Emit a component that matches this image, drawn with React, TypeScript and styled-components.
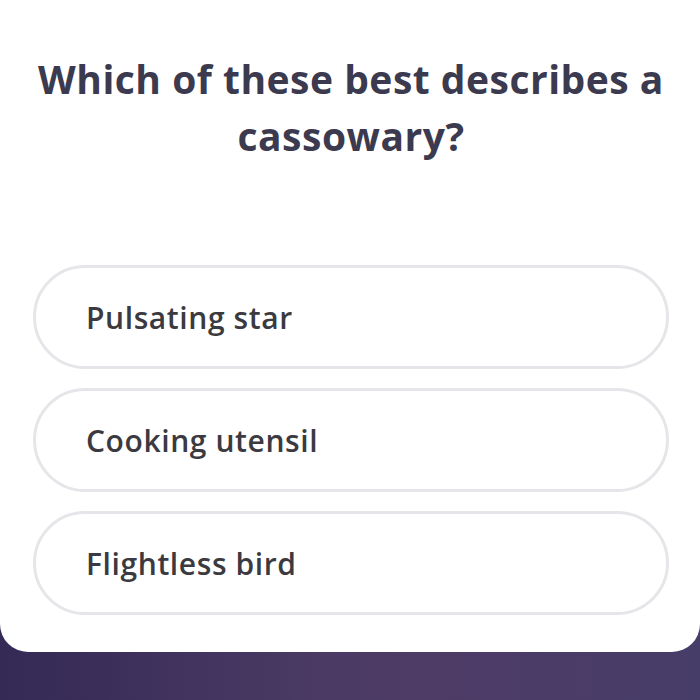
import React from "react";
import styled, { createGlobalStyle } from "styled-components";

const Global = createGlobalStyle`
  html, body { margin: 0; padding: 0; }
  body {
    width: 700px;
    height: 700px;
    overflow: hidden;
    background: linear-gradient(90deg, #342a55 0%, #4a3a64 45%, #4e3b66 60%, #463d68 100%);
    font-family: "Open Sans", "Liberation Sans", sans-serif;
    font-variant-ligatures: none;
  }
`;

const Card = styled.main`
  box-sizing: border-box;
  width: 700px;
  height: 652px;
  background: #ffffff;
  border-radius: 0 0 28px 28px;
  padding: 50px 31px 0 33px;
  display: flex;
  flex-direction: column;
`;

const Question = styled.h1`
  margin: 0;
  text-align: center;
  font-family: "Open Sans", "Liberation Sans", sans-serif;
  font-weight: 700;
  font-size: 39px;
  line-height: 57px;
  letter-spacing: 0.5px;
  color: #3c3a4e;
`;

const Options = styled.div`
  margin-top: 101px;
  display: flex;
  flex-direction: column;
  gap: 19px;
`;

const Option = styled.button`
  box-sizing: border-box;
  height: 104px;
  width: 100%;
  border: 3px solid #e6e6ea;
  border-radius: 52px;
  background: #ffffff;
  padding: 1px 0 0 50px;
  text-align: left;
  font-family: "Open Sans", "Liberation Sans", sans-serif;
  font-variant-ligatures: none;
  font-weight: 600;
  font-size: 30px;
  letter-spacing: 0.6px;
  color: #3b3a40;
  cursor: pointer;
`;

const answers = ["Pulsating star", "Cooking utensil", "Flightless bird"];

export default function App() {
  return (
    <>
      <Global />
      <Card>
        <Question>Which of these best describes a cassowary?</Question>
        <Options>
          {answers.map((a) => (
            <Option key={a}>{a}</Option>
          ))}
        </Options>
      </Card>
    </>
  );
}
